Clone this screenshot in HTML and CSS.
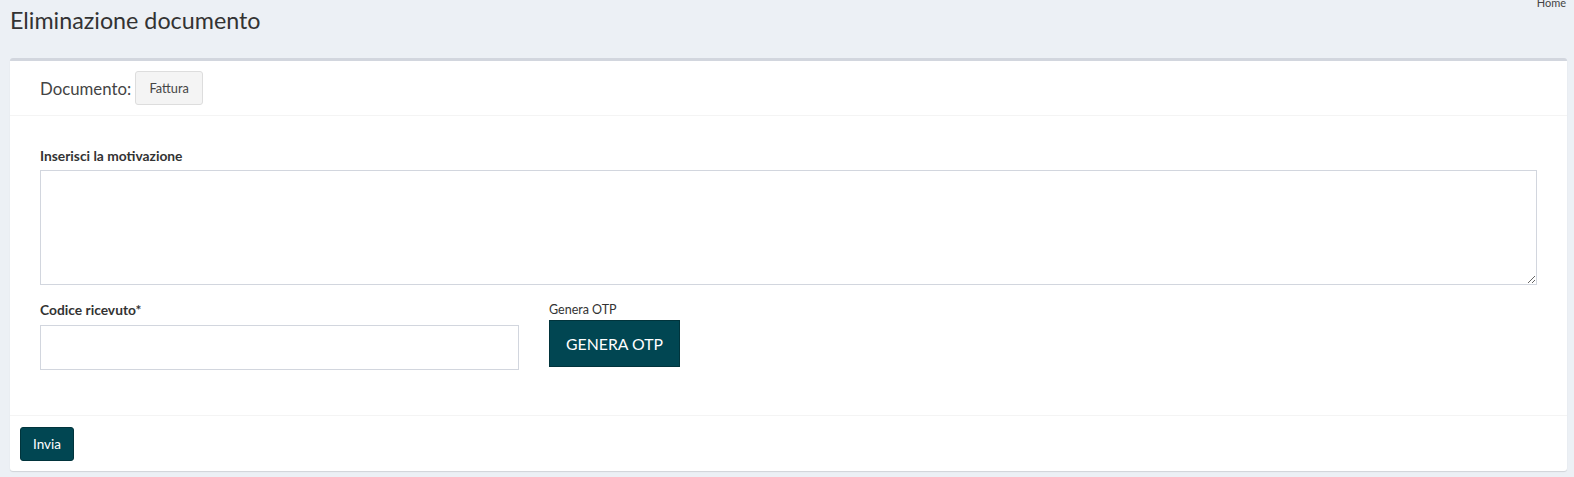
FILE: index.html
```html
<!DOCTYPE html>
<html lang="it">
<head>
<meta charset="utf-8">
<title>Eliminazione documento</title>
<link rel="stylesheet" href="styles.css">
</head>
<body>
<div class="wrapper">
  <header class="content-header">
    <h1>Eliminazione documento</h1>
    <ol class="breadcrumb"><li>Home</li></ol>
  </header>
  <section class="content">
    <div class="box">
      <div class="box-header">
        <span class="doc-label">Documento:</span>
        <button class="btn-default" type="button">Fattura</button>
      </div>
      <div class="box-body">
        <div class="form-group">
          <label class="lbl-bold">Inserisci la motivazione</label>
          <textarea class="form-control area"></textarea>
        </div>
        <div class="row">
          <div class="col-code">
            <label class="lbl-bold">Codice ricevuto*</label>
            <input class="form-control input" type="text">
          </div>
          <div class="col-otp">
            <label class="lbl-small">Genera OTP</label>
            <button class="btn-otp" type="button">GENERA OTP</button>
          </div>
        </div>
      </div>
      <div class="box-footer">
        <button class="btn-primary" type="submit">Invia</button>
      </div>
    </div>
  </section>
</div>
</body>
</html>
```

FILE: styles.css
```css
* { box-sizing: border-box; }
html, body { margin: 0; padding: 0; }
body {
  background: #ecf0f5;
  font-family: Lato, "Noto Sans", "Liberation Sans", sans-serif;
  color: #333;
  font-size: 14px;
  width: 1574px;
  height: 477px;
  overflow: hidden;
}
.content-header {
  position: relative;
  padding: 5px 10px 0 10px;
  height: 58px;
}
.content-header h1 {
  margin: 0;
  font-size: 23.3px;
  font-weight: 400;
  line-height: 30px;
  color: #333;
}
.breadcrumb {
  position: absolute;
  top: -4px;
  right: 8px;
  margin: 0;
  padding: 0;
  list-style: none;
  font-size: 11px;
  line-height: 14px;
  color: #444;
}
.content { padding: 0 7px 0 10px; }
.box {
  background: #fff;
  border-top: 3px solid #d2d6de;
  border-radius: 3px;
  box-shadow: 0 1px 1px rgba(0,0,0,0.12);
}
.box-header {
  display: flex;
  align-items: center;
  gap: 4px;
  padding: 10px 30px 10px 30px;
  border-bottom: 1px solid #f4f4f4;
  height: 55px;
}
.doc-label { font-size: 16.8px; color: #444; }
.btn-default {
  font-family: inherit;
  background: #f4f4f4;
  border: 1px solid #ddd;
  border-radius: 3px;
  color: #444;
  font-size: 12.8px;
  width: 68px;
  height: 34px;
  padding: 0;
}
.box-body { padding: 32px 30px 0 30px; height: 300px; border-bottom: 1px solid #f4f4f4; }
.form-group { display: flex; flex-direction: column; }
.lbl-bold {
  font-weight: 700;
  font-size: 13.8px;
  line-height: 16px;
  margin-bottom: 6px;
}
.form-control {
  border: 1px solid #d2d6de;
  border-radius: 0;
  font-family: inherit;
  background: #fff;
}
.area { width: 1497px; height: 115px; resize: vertical; display: block; }
.row { display: flex; gap: 30px; margin-top: 17px; }
.col-code { display: flex; flex-direction: column; width: 479px; }
.col-otp { display: flex; flex-direction: column; }
.input { height: 45px; width: 479px; margin-top: 1px; }
.lbl-small { font-size: 12.5px; line-height: 16px; margin-bottom: 2px; color: #333; }
.btn-otp {
  font-family: inherit;
  background: #014652;
  color: #fff;
  border: 1px solid #01343c;
  font-size: 15.8px;
  width: 131px;
  height: 47px;
  padding: 0;
}
.box-footer { padding: 11px 10px 9px 10px; height: 55px; }
.btn-primary {
  font-family: inherit;
  background: #014652;
  color: #fff;
  border: 1px solid #01343c;
  border-radius: 3px;
  font-size: 13.5px;
  width: 54px;
  height: 34px;
  padding: 0;
}
```
